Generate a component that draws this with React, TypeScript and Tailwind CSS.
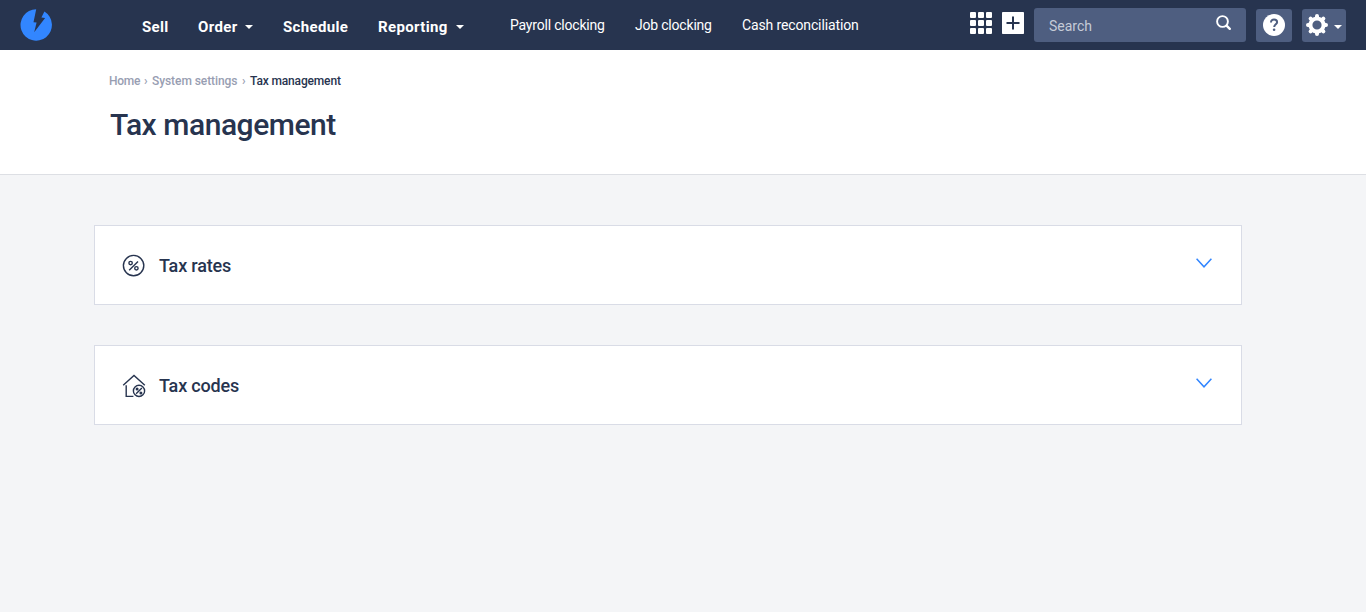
import React from "react";

const Caret = ({ className = "" }: { className?: string }) => (
  <svg className={`h-1 w-2 shrink-0 ${className}`} viewBox="0 0 8 4" fill="currentColor">
    <path d="M0 0h8L4 4z" />
  </svg>
);

const Logo = () => (
  <svg className="mt-[9px] ml-5 size-8 shrink-0" viewBox="0 0 32 32">
    <path
      fill="#3286ff"
      d="M16.2 0.3 13.5 13.3 16.6 13.4 14.2 23.2 25.1 9 21.4 8.6 24.4 2.6A15.7 15.7 0 1 1 16.2 0.3Z"
    />
  </svg>
);

const GridIcon = () => (
  <svg className="mt-3 h-[22px] w-[22px] shrink-0" viewBox="0 0 22 22" fill="#fff">
    {[0, 8, 16].map((y) =>
      [0, 8, 16].map((x) => <rect key={`${x}-${y}`} x={x} y={y} width="6" height="6" rx="1" />)
    )}
  </svg>
);

const RateIcon = () => (
  <svg className="mt-px size-6 shrink-0" viewBox="0 0 24 24" fill="none" stroke="#27344f" strokeWidth="1.4">
    <circle cx="11.6" cy="11.6" r="10.2" />
    <circle cx="8.6" cy="9.1" r="1.7" />
    <circle cx="14.4" cy="14.3" r="1.7" />
    <path d="m16 7.4-8.8 8.8" />
  </svg>
);

const CodeIcon = () => (
  <svg className="mt-px size-6 shrink-0" viewBox="0 0 24 24" fill="none" stroke="#27344f" strokeWidth="1.4">
    <path d="M1.2 11.2 12 1.5l10.8 9.7M4.2 11.2v11.2h7.2" />
    <circle cx="17" cy="16.9" r="5.6" />
    <circle cx="15.1" cy="15" r="0.8" />
    <circle cx="18.9" cy="18.9" r="0.8" />
    <path d="m19.9 14-5.8 5.8" />
  </svg>
);

const Panel = ({ title, icon }: { title: string; icon: React.ReactNode }) => (
  <section className="flex h-20 items-center border border-[#d9dce6] bg-white pr-[29px] pl-[27px]">
    {icon}
    <h2 className="mt-[2px] ml-[13px] grow text-[18px] leading-6 font-medium tracking-[-0.18px]">{title}</h2>
    <svg className="-mt-1 h-[10px] w-4" viewBox="0 0 16 10" fill="none" stroke="#3286ff" strokeWidth="1.5">
      <path d="m.6.8 7.4 8 7.4-8" />
    </svg>
  </section>
);

export default function App() {
  return (
    <div className="min-h-screen bg-[#f4f5f7] font-['Roboto',sans-serif] text-[#27344f]">
      <header className="flex h-[50px] items-start bg-[#27344f] whitespace-nowrap text-white">
        <Logo />
        <nav className="ml-[90px] flex pt-[17px] text-[15px] leading-5 font-bold tracking-[0.35px]">
          <a className="w-14">Sell</a>
          <a className="flex w-[85px] items-center">
            <span className="w-[47px]">Order</span>
            <Caret />
          </a>
          <a className="w-[95px]">Schedule</a>
          <a className="flex w-[132px] items-center">
            <span className="w-[78px]">Reporting</span>
            <Caret />
          </a>
        </nav>
        <nav className="flex grow pt-[15px] text-[14px] leading-5 tracking-[-0.2px]">
          <a className="w-[125px]">Payroll clocking</a>
          <a className="w-[107px]">Job clocking</a>
          <a className="tracking-[-0.13px]">Cash reconciliation</a>
        </nav>
        <GridIcon />
        <svg className="mt-3 ml-[10px] size-[22px] shrink-0" viewBox="0 0 22 22">
          <rect width="22" height="22" rx="0.8" fill="#fff" />
          <path d="M4.5 11h13M11 4.5v13" stroke="#27344f" strokeWidth="2" />
        </svg>
        <div className="mt-2 ml-[10px] flex h-[34px] w-[212px] justify-between rounded-[3px] bg-[#4e5e80] pr-[14px] pl-[15px]">
          <span className="pt-2 text-[14px] leading-5 text-[#c5cbd7]">Search</span>
          <svg className="mt-[7px] size-4" viewBox="0 0 16 16" fill="none" stroke="#fff">
            <circle cx="6.5" cy="6.5" r="5.4" strokeWidth="1.9" />
            <path d="m10.8 10.8 3 3" strokeWidth="2.4" strokeLinecap="round" />
          </svg>
        </div>
        <div className="mt-[9px] ml-[10px] flex h-[33px] w-9 justify-center rounded-[3px] bg-[#4e5e80] pt-[5px]">
          <svg className="size-[22px]" viewBox="0 0 22 22" fill="none">
            <circle cx="11" cy="11" r="11" fill="#fff" />
            <path d="M8 8.4C8 6.6 9.3 5.6 11 5.6s3.1 1 3.1 2.7c0 2-2.9 2.2-2.9 4.8" stroke="#4e5e80" strokeWidth="2" />
            <circle cx="11.1" cy="15.7" r="1.3" fill="#4e5e80" />
          </svg>
        </div>
        <div className="mt-[9px] mr-5 ml-[10px] flex h-[33px] w-11 items-start rounded-[3px] bg-[#4e5e80] pt-[5px] pl-1">
          <svg className="size-[22px] shrink-0" viewBox="0 0 22 22" fill="none" stroke="#fff">
            <circle cx="11" cy="11" r="6.6" strokeWidth="4" />
            {[0, 45, 90, 135].map((a) => (
              <path
                key={a}
                d="M11 2v2M11 18v2"
                strokeWidth="4"
                strokeLinecap="round"
                transform={`rotate(${a} 11 11)`}
              />
            ))}
          </svg>
          <Caret className="mt-[11px] ml-[6px]" />
        </div>
      </header>

      <div className="h-[125px] border-b border-[#dddfe4] bg-white pt-[21px] pl-[109px] whitespace-nowrap">
        <div className="flex text-[12px] leading-5 font-medium text-[#989eb2]">
          <a className="w-[35px] tracking-[-0.3px]">Home</a>
          <span className="w-2">›</span>
          <a className="w-[90px] tracking-[-0.07px]">System settings</a>
          <span className="w-2">›</span>
          <span className="tracking-[-0.15px] text-[#27344f]">Tax management</span>
        </div>
        <h1 className="mt-[14px] ml-px text-[30px] leading-10 font-medium tracking-[-0.45px]">Tax management</h1>
      </div>

      <main className="flex w-[1242px] flex-col gap-10 pt-[50px] pl-[94px]">
        <Panel title="Tax rates" icon={<RateIcon />} />
        <Panel title="Tax codes" icon={<CodeIcon />} />
      </main>
    </div>
  );
}
